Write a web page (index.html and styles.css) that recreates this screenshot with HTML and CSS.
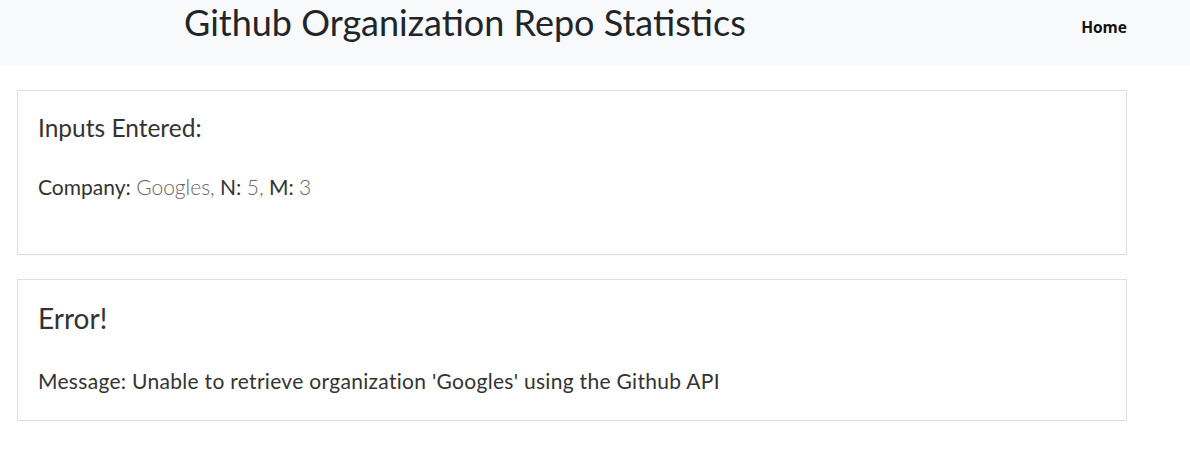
FILE: index.html
```html
<!DOCTYPE html>
<html>
<head>
<meta charset="utf-8">
<link rel="stylesheet" href="styles.css">
</head>
<body>
<header class="topbar">
  <h1 class="title">Github Organization Repo Statistics</h1>
  <nav class="nav"><a class="nav-link" href="#">Home</a></nav>
</header>
<main class="content">
  <section class="card card-inputs">
    <h2 class="card-title">Inputs Entered:</h2>
    <p class="card-text inputs-text"><span class="label">Company:</span> <span class="value">Googles,</span> <span class="label">N:</span> <span class="value">5,</span> <span class="label">M:</span> <span class="value">3</span></p>
  </section>
  <section class="card card-error">
    <h2 class="card-title error-title">Error!</h2>
    <p class="card-text error-text">Message: Unable to retrieve organization 'Googles' using the Github API</p>
  </section>
</main>
</body>
</html>
```
FILE: styles.css
```css
* { box-sizing: border-box; }
html, body { margin: 0; padding: 0; background: #fff; }
body {
  font-family: Lato, "Noto Sans", sans-serif;
  color: #333;
}
.topbar {
  height: 65px;
  background: #f8f9fa;
  display: flex;
  align-items: flex-start;
  justify-content: space-between;
  padding: 0 63px 0 184px;
}
.title {
  margin: 0;
  padding-top: 0;
  font-size: 36px;
  font-weight: 400;
  line-height: 44px;
  color: #212529;
}
.nav { padding-top: 16px; }
.nav-link {
  font-family: "Open Sans", Lato, sans-serif;
  font-size: 15.5px;
  font-weight: 700;
  color: #111;
  text-decoration: none;
  line-height: 22px;
}
.content {
  padding: 25px 17px;
  display: flex;
  flex-direction: column;
  gap: 24px;
}
.card {
  width: 1110px;
  border: 1px solid #dfdfdf;
  padding: 20px 20px;
}
.card-inputs { height: 165px; }
.card-error { height: 142px; }
.card-title {
  margin: 0;
  font-size: 24.5px;
  font-weight: 400;
  line-height: 34px;
  color: #333;
}
.error-title { font-size: 28px; line-height: 36px; }
.card-text {
  font-size: 21px;
  line-height: 28px;
  color: #333;
}
.inputs-text { margin: 28px 0 0; }
.error-text { margin: 31px 0 0; letter-spacing: 0.3px; }
.label { font-weight: 400; color: #333; }
.value { font-weight: 300; color: #666; }
```
